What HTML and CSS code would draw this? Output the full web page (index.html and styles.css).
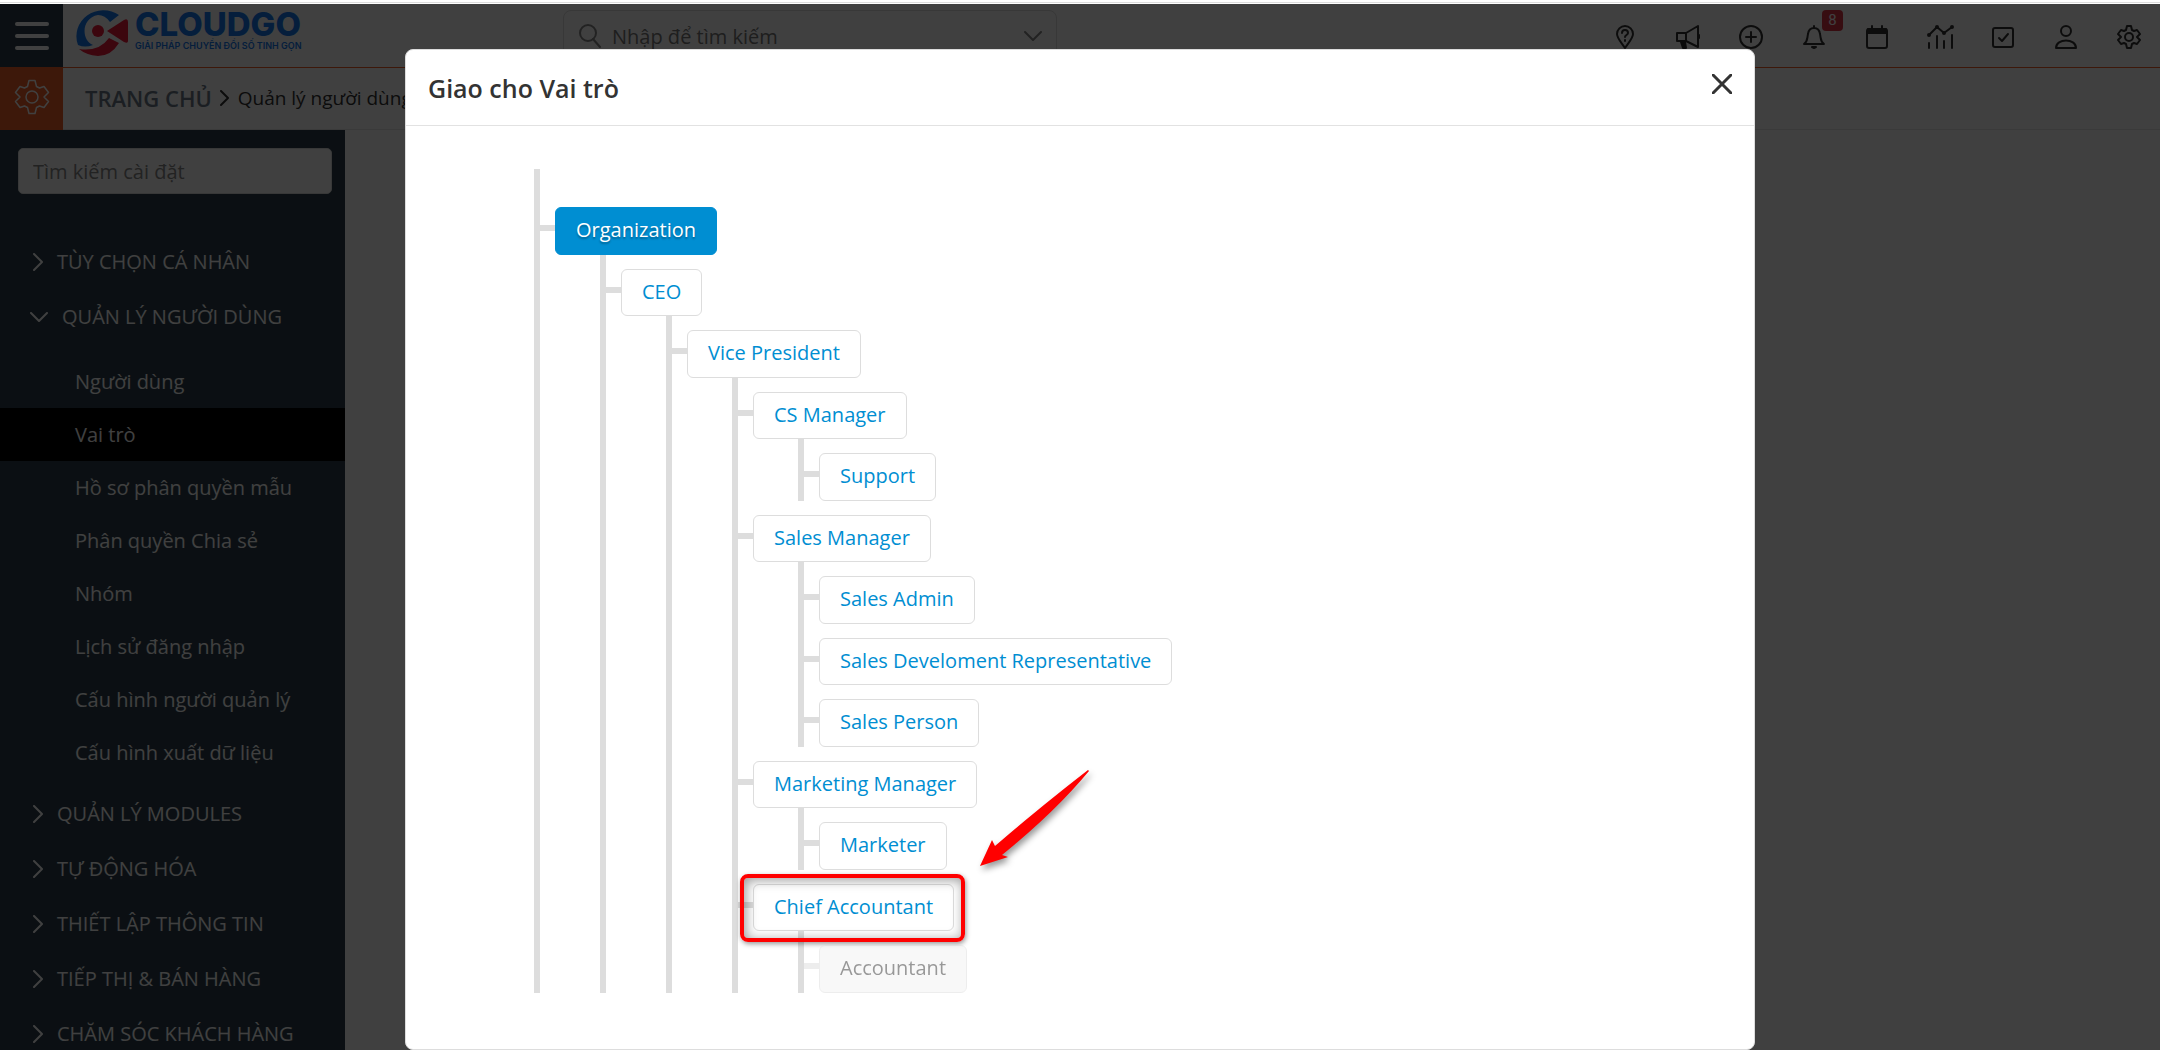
FILE: index.html
```html
<!DOCTYPE html>
<html lang="vi">
<head>
    <meta charset="UTF-8">
    <meta name="viewport" content="width=device-width, initial-scale=1.0">
    <title>CloudGO - Vai trò</title>
    <link rel="stylesheet" href="styles.css">
</head>
<body>
    <div class="top-strip"></div>
    <div class="app">
        <header class="navbar">
            <button class="menu-btn" aria-label="Menu"><span></span><span></span><span></span></button>
            <a class="logo" href="#">
                <svg class="logo-mark" viewBox="0 0 56 50" aria-hidden="true">
                    <path fill="#1479f0" d="M46 9 A27 26 0 0 0 5 39 Q12 42 20 39 C8 34 8 12 25 9 Q32 9 37 16 Z"/>
                    <path fill="#ee1838" d="M6 43 Q26 46 36 32 L46 37 Q38 50 25 50 Q13 49 6 43 Z"/>
                    <circle cx="25" cy="25" r="6" fill="#ee1838"/>
                    <path fill="#ee1838" d="M34 25 L51 14 Q55 12 55 16 V35 Q55 38 51 36 Z"/>
                </svg>
                <span class="logo-text">
                    <span class="logo-name">CLOUDGO</span>
                    <span class="logo-slogan">GIẢI PHÁP CHUYỂN ĐỔI SỐ TINH GỌN</span>
                </span>
            </a>
            <div class="global-search">
                <svg viewBox="0 0 24 24" class="icon"><circle cx="10" cy="9" r="8"/><path d="M15 15l7 8"/></svg>
                <input type="text" aria-label="Tìm kiếm" placeholder="Nhập để tìm kiếm">
                <svg viewBox="0 0 18 10" class="icon-chevron"><path d="M1 1l8 8 8-8"/></svg>
            </div>
            <nav class="nav-icons">
                <button aria-label="Trợ giúp"><svg viewBox="0 0 24 24" class="icon"><path d="M12 23C8 17 4 13 4 9a8 8 0 0 1 16 0c0 4-4 8-8 14z"/><path d="M9 8c0-4 6-4 6 0 0 2-3 2-3 4M12 15v1"/></svg></button>
                <button aria-label="Thông báo chung"><svg viewBox="0 0 24 24" class="icon"><path d="M1 8h9l12-7v21l-12-6H1zM10 8v8M23 10v3"/><path d="M5 17h4l1 6H7z" fill="currentColor"/></svg></button>
                <button aria-label="Thêm nhanh"><svg viewBox="0 0 24 24" class="icon"><circle cx="12" cy="12" r="11"/><path d="M12 7v10M7 12h10"/></svg></button>
                <button aria-label="Thông báo"><svg viewBox="0 0 24 24" class="icon"><path d="M12 1v2M2 19c4-3 3-6 4-10 1-8 11-8 12 0 1 4 0 7 4 10z"/><path d="M10 22h4l-2 1z" fill="currentColor"/></svg><span class="badge">8</span></button>
                <button aria-label="Lịch"><svg viewBox="0 0 24 24" class="icon"><rect x="2" y="4" width="20" height="19" rx="2"/><path d="M3 4h18v4H3z" fill="currentColor"/><path d="M7 1v3M17 1v3"/></svg></button>
                <button aria-label="Báo cáo"><svg viewBox="0 0 28 24" class="icon icon-wide"><path d="M3 10l8-8 7 6 8-6M3 18v5M11 11v12M18 16v7M26 10v13"/><circle cx="3" cy="10" r="1"/><circle cx="11" cy="2" r="1"/><circle cx="18" cy="8" r="1"/><circle cx="26" cy="2" r="1"/></svg></button>
                <button aria-label="Công việc"><svg viewBox="0 0 24 24" class="icon"><rect x="2" y="3" width="20" height="19" rx="2"/><path d="M8 13l3 3 6-7"/></svg></button>
                <button aria-label="Tài khoản"><svg viewBox="0 0 24 24" class="icon"><circle cx="12" cy="6" r="5"/><path d="M2 23c0-10 20-10 20 0z"/></svg></button>
                <button aria-label="Cài đặt"><svg viewBox="0 0 24 24" class="icon"><path d="M10 1h4l1 4 2 1 3-1 3 4-3 3 3 3-3 4-3-1-2 1-1 4h-4l-1-4-2-1-3 1-3-4 3-3-3-3 3-4 3 1 2-1z"/><circle cx="12" cy="12" r="4"/></svg></button>
            </nav>
        </header>

        <div class="subbar">
            <div class="module-icon">
                <svg viewBox="0 0 24 24" class="icon"><path d="M10 1h4l1 4 2 1 3-1 3 4-3 3 3 3-3 4-3-1-2 1-1 4h-4l-1-4-2-1-3 1-3-4 3-3-3-3 3-4 3 1 2-1z"/><circle cx="12" cy="12" r="4"/></svg>
            </div>
            <nav class="breadcrumb">
                <a class="crumb-home" href="#">TRANG CHỦ</a>
                <svg viewBox="0 0 10 16" class="crumb-arrow"><path d="M1 1l7 7-7 7"/></svg>
                <a href="#">Quản lý người dùng</a>
            </nav>
        </div>

        <aside class="sidebar">
            <input class="settings-search" type="text" aria-label="Tìm kiếm cài đặt" placeholder="Tìm kiếm cài đặt">
            <nav class="menu">
                <a class="menu-title" href="#"><svg viewBox="0 0 10 18"><path d="M1 1l8 8-8 8"/></svg>TÙY CHỌN CÁ NHÂN</a>
                <a class="menu-title open" href="#"><svg viewBox="0 0 18 10"><path d="M1 1l8 8 8-8"/></svg>QUẢN LÝ NGƯỜI DÙNG</a>
                <div class="submenu">
                    <a href="#">Người dùng</a>
                    <a class="active" href="#">Vai trò</a>
                    <a href="#">Hồ sơ phân quyền mẫu</a>
                    <a href="#">Phân quyền Chia sẻ</a>
                    <a href="#">Nhóm</a>
                    <a href="#">Lịch sử đăng nhập</a>
                    <a href="#">Cấu hình người quản lý</a>
                    <a href="#">Cấu hình xuất dữ liệu</a>
                </div>
                <a class="menu-title" href="#"><svg viewBox="0 0 10 18"><path d="M1 1l8 8-8 8"/></svg>QUẢN LÝ MODULES</a>
                <a class="menu-title" href="#"><svg viewBox="0 0 10 18"><path d="M1 1l8 8-8 8"/></svg>TỰ ĐỘNG HÓA</a>
                <a class="menu-title" href="#"><svg viewBox="0 0 10 18"><path d="M1 1l8 8-8 8"/></svg>THIẾT LẬP THÔNG TIN</a>
                <a class="menu-title" href="#"><svg viewBox="0 0 10 18"><path d="M1 1l8 8-8 8"/></svg>TIẾP THỊ &amp; BÁN HÀNG</a>
                <a class="menu-title" href="#"><svg viewBox="0 0 10 18"><path d="M1 1l8 8-8 8"/></svg>CHĂM SÓC KHÁCH HÀNG</a>
            </nav>
        </aside>
    </div>

    <div class="overlay">
        <div class="modal" role="dialog" aria-labelledby="modalTitle">
            <div class="modal-header">
                <h2 id="modalTitle">Giao cho Vai trò</h2>
                <button class="close-btn" aria-label="Đóng"><svg viewBox="0 0 20 20"><path d="M1 1l18 18M19 1L1 19"/></svg></button>
            </div>
            <div class="modal-body">
                <ul class="tree">
                    <li>
                        <div class="row"><a class="role root" href="#">Organization</a></div>
                        <ul>
                            <li>
                                <div class="row"><a class="role" href="#">CEO</a></div>
                                <ul>
                                    <li>
                                        <div class="row"><a class="role" href="#">Vice President</a></div>
                                        <ul>
                                            <li>
                                                <div class="row"><a class="role" href="#">CS Manager</a></div>
                                                <ul>
                                                    <li><div class="row"><a class="role" href="#">Support</a></div></li>
                                                </ul>
                                            </li>
                                            <li>
                                                <div class="row"><a class="role" href="#">Sales Manager</a></div>
                                                <ul>
                                                    <li><div class="row"><a class="role" href="#">Sales Admin</a></div></li>
                                                    <li><div class="row"><a class="role" href="#">Sales Develoment Representative</a></div></li>
                                                    <li><div class="row"><a class="role" href="#">Sales Person</a></div></li>
                                                </ul>
                                            </li>
                                            <li>
                                                <div class="row"><a class="role" href="#">Marketing Manager</a></div>
                                                <ul>
                                                    <li><div class="row"><a class="role" href="#">Marketer</a></div></li>
                                                </ul>
                                            </li>
                                            <li>
                                                <div class="row">
                                                    <a class="role marked" href="#">Chief Accountant
                                                        <span class="mark-box"></span>
                                                        <svg class="mark-arrow" viewBox="0 0 124 112" aria-hidden="true"><path d="M5 102 L17 76 L20 82 Q64 44 113 6 L114 7 Q80 48 27 91 L33 93 Z"/></svg>
                                                    </a>
                                                </div>
                                                <ul>
                                                    <li><div class="row disabled"><a class="role" href="#">Accountant</a></div></li>
                                                </ul>
                                            </li>
                                        </ul>
                                    </li>
                                </ul>
                            </li>
                        </ul>
                    </li>
                </ul>
            </div>
        </div>
    </div>
</body>
</html>
```

FILE: styles.css
```css
* {
    box-sizing: border-box;
}

body {
    margin: 0;
    height: 100vh;
    overflow: hidden;
    display: flex;
    flex-direction: column;
    font-family: "Open Sans", "Noto Sans", sans-serif;
    font-size: 20px;
    color: #333;
    background: #fff;
}

a {
    color: inherit;
    text-decoration: none;
}

button {
    border: none;
    padding: 0;
    background: none;
    color: inherit;
    cursor: pointer;
}

svg {
    fill: none;
    stroke: currentColor;
    stroke-width: 2;
    stroke-linecap: round;
    stroke-linejoin: round;
    flex-shrink: 0;
}

.icon {
    width: 24px;
    height: 24px;
}

.top-strip {
    height: 4px;
    flex-shrink: 0;
    border-bottom: 1px solid #fff;
    box-shadow: inset 0 -1px 0 #ddd;
}

.app {
    flex: 1;
    min-height: 0;
    display: flex;
    flex-direction: column;
}

/* Top bar */
.navbar {
    height: 64px;
    flex-shrink: 0;
    display: flex;
    border-bottom: 1px solid #f46028;
}

.menu-btn {
    width: 63px;
    display: flex;
    flex-direction: column;
    align-items: center;
    justify-content: center;
    gap: 8px;
    background: #2c3f4c;
}

.menu-btn span {
    width: 34px;
    height: 4px;
    border-radius: 2px;
    background: #fff;
}

.logo {
    display: flex;
    align-items: flex-start;
    gap: 6px;
    padding: 2px 0 0 10px;
    width: 500px;
}

.logo-mark {
    width: 56px;
    height: 50px;
    stroke: none;
}

.logo-text {
    display: flex;
    flex-direction: column;
    font-family: Inter, sans-serif;
    color: #1479f0;
}

.logo-name {
    font-size: 33px;
    line-height: 36px;
    font-weight: 800;
}

.logo-slogan {
    font-size: 9px;
    line-height: 8px;
    font-weight: 600;
    white-space: nowrap;
}

.global-search {
    width: 494px;
    height: 52px;
    margin-top: 6px;
    padding: 0 14px;
    display: flex;
    align-items: center;
    gap: 8px;
    border: 1px solid #ddd;
    border-radius: 8px;
    color: #888;
}

.global-search input {
    flex: 1;
    border: none;
    outline: none;
    background: none;
    font: inherit;
}

.global-search input::placeholder {
    color: #777;
}

.icon-chevron {
    width: 18px;
    height: 10px;
}

.nav-icons {
    margin-left: auto;
    display: flex;
}

.nav-icons button {
    width: 63px;
    height: 68px;
    position: relative;
}

.nav-icons .icon-wide {
    width: 28px;
}

.badge {
    position: absolute;
    top: 6px;
    right: 2px;
    width: 21px;
    height: 21px;
    border-radius: 4px;
    background: #dc3545;
    color: #fff;
    font-family: Roboto, sans-serif;
    font-size: 15px;
    line-height: 21px;
}

/* Breadcrumb */
.subbar {
    height: 62px;
    flex-shrink: 0;
    display: flex;
    border-bottom: 1px solid #e5e5e5;
}

.module-icon {
    width: 63px;
    height: 62px;
    padding-bottom: 5px;
    display: flex;
    align-items: center;
    justify-content: center;
    background: #f46028;
    color: #fff;
}

.module-icon .icon {
    width: 36px;
    height: 38px;
    stroke-width: 1;
}

.breadcrumb {
    display: flex;
    align-items: center;
    gap: 8px;
    padding: 0 0 2px 22px;
    font-size: 19px;
}

.crumb-home {
    color: #6c7a89;
    font-size: 22px;
    font-weight: 600;
}

.crumb-arrow {
    width: 10px;
    height: 16px;
}

/* Sidebar */
.sidebar {
    width: 345px;
    flex: 1;
    min-height: 0;
    overflow: hidden;
    padding-top: 18px;
    background: #2c3f4c;
    color: #fff;
}

.settings-search {
    display: block;
    width: 314px;
    height: 46px;
    margin: 0 0 40px 18px;
    padding: 0 14px;
    border: 1px solid #ddd;
    border-radius: 5px;
    font: inherit;
}

.settings-search::placeholder {
    color: #888;
}

.menu-title {
    display: flex;
    align-items: center;
    gap: 14px;
    height: 55px;
    padding-left: 33px;
}

.menu-title svg {
    width: 10px;
    height: 18px;
}

.menu-title.open {
    padding-left: 30px;
}

.menu-title.open svg {
    width: 18px;
    height: 10px;
}

.submenu {
    padding: 11px 0 7px;
}

.submenu a {
    display: block;
    padding-left: 75px;
    line-height: 53px;
}

.submenu a.active {
    background: #000;
}

/* Modal */
.overlay {
    position: fixed;
    inset: 0;
    top: 4px;
    padding-top: 45px;
    background: rgba(0, 0, 0, 0.75);
}

.modal {
    width: 1350px;
    max-width: 100%;
    height: 100%;
    margin: 0 auto;
    border: 1px solid #ddd;
    border-radius: 8px;
    background: #fff;
}

.modal-header {
    height: 76px;
    display: flex;
    align-items: center;
    justify-content: space-between;
    padding: 0 22px;
    border-bottom: 1px solid #e2e2e2;
}

.modal-header h2 {
    margin: 0;
    font-size: 25px;
    font-weight: 600;
}

.close-btn {
    margin-bottom: 8px;
}

.close-btn svg {
    display: block;
    width: 20px;
    height: 20px;
    stroke-width: 3;
}

.modal-body {
    padding: 43px 128px;
}

/* Role tree */
.tree,
.tree ul {
    list-style: none;
    margin: 0;
    padding: 0;
    border-left: 6px solid #ddd;
}

.tree {
    padding-top: 24px;
}

.tree ul {
    margin-left: 60px;
}

.tree li {
    padding-top: 14px;
}

.row {
    display: flex;
    align-items: flex-start;
}

.row::before {
    content: "";
    width: 15px;
    height: 6px;
    margin-top: 18px;
    background: #ddd;
}

.role {
    padding: 6px 20px 8px;
    border: 1px solid #ddd;
    border-radius: 6px;
    background: #fff;
    color: #008ed2;
    font-size: 20px;
    line-height: 1.575;
    white-space: nowrap;
}

.role.root {
    border-color: #008ed2;
    background: #008ed2;
    color: #fff;
    text-shadow: 0 2px 2px rgba(0, 0, 0, 0.3);
}

.disabled {
    opacity: 0.5;
}

.disabled .role {
    background: #f2f2f2;
    color: #333;
}

/* Highlight drawn over the chosen role */
.marked {
    position: relative;
}

.mark-box {
    position: absolute;
    inset: -11px -12px -12px -14px;
    border: 4px solid #f00;
    border-radius: 8px;
    box-shadow: 1px 2px 5px rgba(0, 0, 0, 0.4), inset 2px 2px 12px rgba(0, 0, 0, 0.4);
}

.mark-arrow {
    position: absolute;
    left: 221px;
    top: -121px;
    width: 124px;
    height: 112px;
    fill: #f00;
    stroke: none;
    filter: drop-shadow(2px 4px 3px rgba(0, 0, 0, 0.4));
}
```
